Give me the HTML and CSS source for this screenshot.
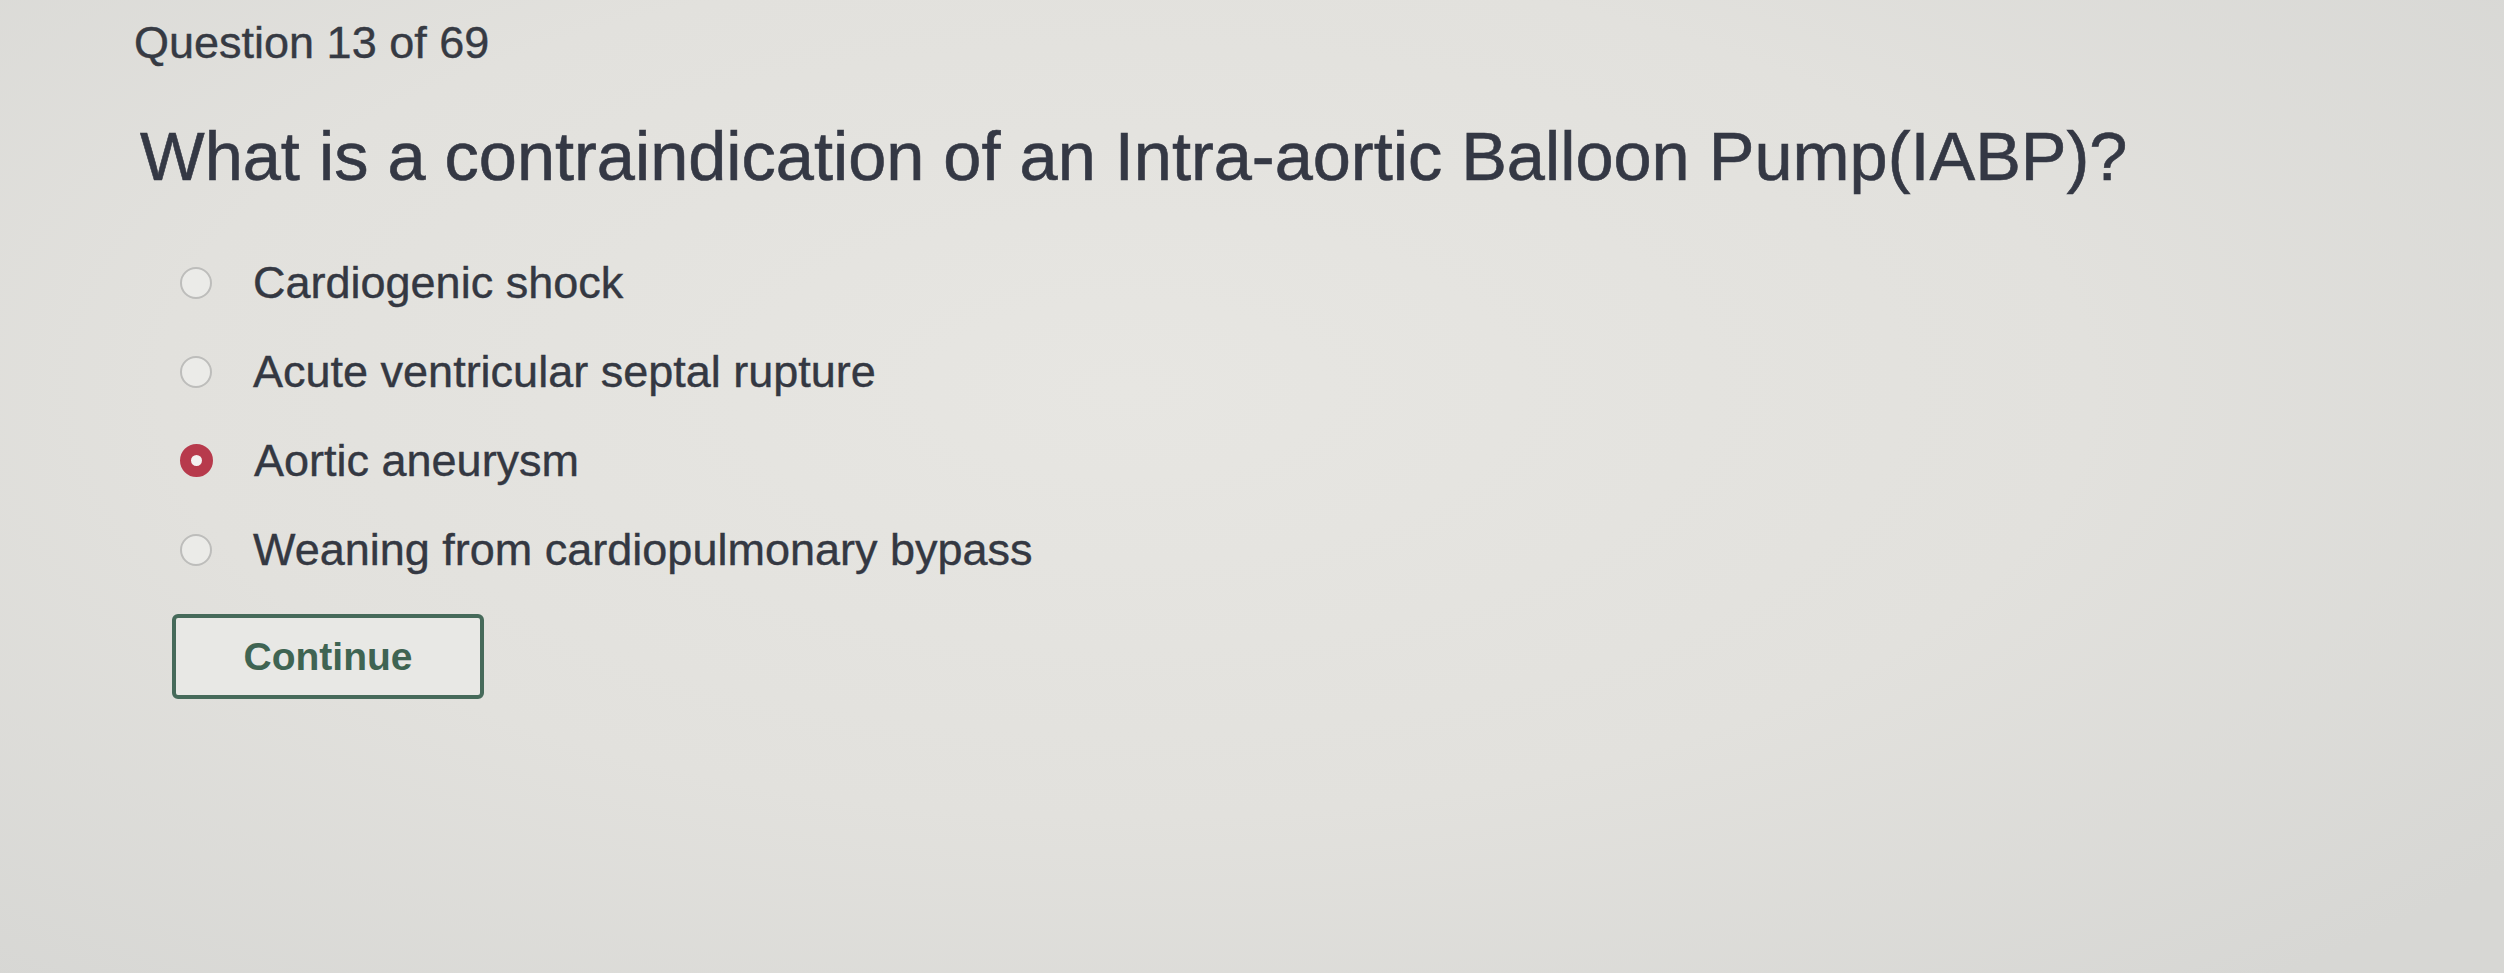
FILE: index.html
```html
<!DOCTYPE html>
<html lang="en">
<head>
<meta charset="utf-8">
<title>Question 13 of 69</title>
<link rel="stylesheet" href="styles.css">
</head>
<body>
<main class="page">
  <div class="counter">Question 13 of 69</div>
  <h1 class="question">What is a contraindication of an Intra-aortic Balloon Pump(IABP)?</h1>
  <ul class="options">
    <li class="option"><span class="radio"></span><span class="label">Cardiogenic shock</span></li>
    <li class="option"><span class="radio"></span><span class="label">Acute ventricular septal rupture</span></li>
    <li class="option"><span class="radio radio-selected"></span><span class="label">Aortic aneurysm</span></li>
    <li class="option"><span class="radio"></span><span class="label">Weaning from cardiopulmonary bypass</span></li>
  </ul>
  <button class="continue" type="button">Continue</button>
</main>
</body>
</html>
```
FILE: styles.css
```css
html, body {
  margin: 0;
  height: 100%;
}
body {
  background: radial-gradient(ellipse 70% 80% at 45% 40%, #e7e6e2 0%, #e2e1dd 55%, #d7d7d4 100%);
  font-family: "Liberation Sans", Arial, sans-serif;
  color: #353943;
  overflow: hidden;
}
.page {
  padding: 17px 0 0 134px;
}
.counter {
  font-size: 45px;
  line-height: 52px;
  color: #363a43;
  -webkit-text-stroke: 0.4px #363a43;
}
.question {
  margin: 49px 0 0 6px;
  font-size: 68.5px;
  line-height: 78px;
  font-weight: normal;
  color: #343844;
  -webkit-text-stroke: 0.6px #343844;
}
.options {
  list-style: none;
  margin: 42px 0 0 0;
  padding: 0;
}
.option {
  display: flex;
  align-items: center;
  height: 89px;
  font-size: 45px;
}
.radio {
  box-sizing: border-box;
  width: 32px;
  height: 32px;
  margin-left: 46px;
  margin-right: 41px;
  border-radius: 50%;
  border: 2px solid #bdbdbb;
  background: #ebebe8;
}
.radio-selected {
  width: 33px;
  height: 33px;
  border: 11px solid #b73a4c;
  background: #f4f1f1;
}
.label {
  color: #343842;
  -webkit-text-stroke: 0.4px #343842;
}
.continue {
  display: block;
  box-sizing: border-box;
  margin: 20px 0 0 38px;
  width: 312px;
  height: 85px;
  border: 4px solid #466a5a;
  border-radius: 6px;
  background: #e8e8e5;
  color: #3f6452;
  font-family: "Liberation Sans", Arial, sans-serif;
  font-weight: bold;
  font-size: 39px;
  padding: 0;
}
```
